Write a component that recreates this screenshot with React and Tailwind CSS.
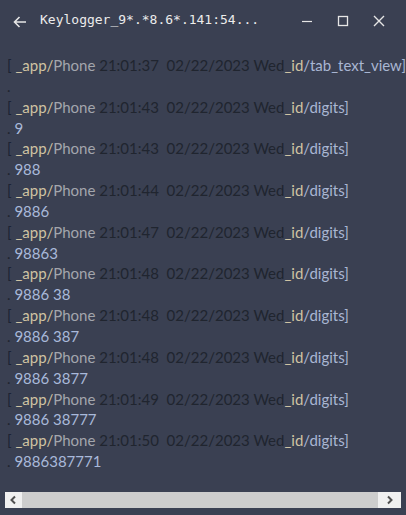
import React from 'react';

const ROWS = [
  { time: '21:01:37', view: 'tab_text_view', value: '' },
  { time: '21:01:43', view: 'digits', value: '9' },
  { time: '21:01:43', view: 'digits', value: '988' },
  { time: '21:01:44', view: 'digits', value: '9886' },
  { time: '21:01:47', view: 'digits', value: '98863' },
  { time: '21:01:48', view: 'digits', value: '9886 38' },
  { time: '21:01:48', view: 'digits', value: '9886 387' },
  { time: '21:01:48', view: 'digits', value: '9886 3877' },
  { time: '21:01:49', view: 'digits', value: '9886 38777' },
  { time: '21:01:50', view: 'digits', value: '9886387771' },
];

function LogEntry({ row }) {
  return (
    <div className="whitespace-pre">
      <div>
        <span className="text-[#1c2334]">[ </span>
        <span className="text-[#cfc3a2]">_app/</span>
        <span className="text-[#a3a6ad]">Phone </span>
        <span className="text-[#20252f]">{row.time}  02/22/2023 Wed</span>
        <span className="text-[#cfc3a2]">_id</span>
        <span className="text-[#a9b6d2]">/{row.view}]</span>
      </div>
      <div>
        <span className="text-[#20252f]">.</span>
        <span className="text-[#a9b9da]"> {row.value}</span>
      </div>
    </div>
  );
}

export default function App() {
  return (
    <div className="w-[406px] h-[515px] bg-[#3a4052] flex flex-col overflow-hidden">
      {/* title bar */}
      <div className="h-[40px] flex items-center shrink-0">
        <svg width="16" height="16" viewBox="0 0 16 16" className="ml-[12px] mt-[3px]" fill="none" stroke="#e6e6e6" strokeWidth="1.6">
          <path d="M14 8H2.5M7.5 3L2.5 8l5 5" />
        </svg>
        <div className="ml-[12px] text-[13px] text-[#ececec] font-['DejaVu_Sans_Mono',monospace]">
          Keylogger_9*.*8.6*.141:54...
        </div>
        <div className="ml-auto flex items-center mr-[21px] mt-[1px]">
          <svg width="12" height="12" viewBox="0 0 12 12" stroke="#e6e6e6" strokeWidth="1.2">
            <path d="M1 6.5h10" />
          </svg>
          <svg width="12" height="12" viewBox="0 0 12 12" fill="none" stroke="#e6e6e6" strokeWidth="1.3" className="ml-[24px]">
            <rect x="1.5" y="1.5" width="9" height="9" />
          </svg>
          <svg width="12" height="12" viewBox="0 0 12 12" stroke="#e6e6e6" strokeWidth="1.4" className="ml-[24px]">
            <path d="M1 1l10 10M11 1L1 11" />
          </svg>
        </div>
      </div>

      {/* log */}
      <div className="flex-1 overflow-hidden pl-[7px] pt-[15px] text-[15px] leading-[20.85px] font-['Lato',sans-serif]">
        {ROWS.map((r, i) => (
          <LogEntry key={i} row={r} />
        ))}
      </div>

      {/* horizontal scrollbar */}
      <div className="mx-[5px] mb-[7px] h-[16px] bg-[#f0f0f0] flex items-center shrink-0">
        <svg width="17" height="16" viewBox="0 0 17 16" fill="none" stroke="#505050" strokeWidth="2">
          <path d="M10 4.5L6.5 8l3.5 3.5" />
        </svg>
        <div className="flex-1 h-[16px] bg-[#cdcdcd]" />
        <svg width="23" height="16" viewBox="0 0 23 16" fill="none" stroke="#505050" strokeWidth="2">
          <path d="M10 4.5l3.5 3.5-3.5 3.5" />
        </svg>
      </div>
    </div>
  );
}
